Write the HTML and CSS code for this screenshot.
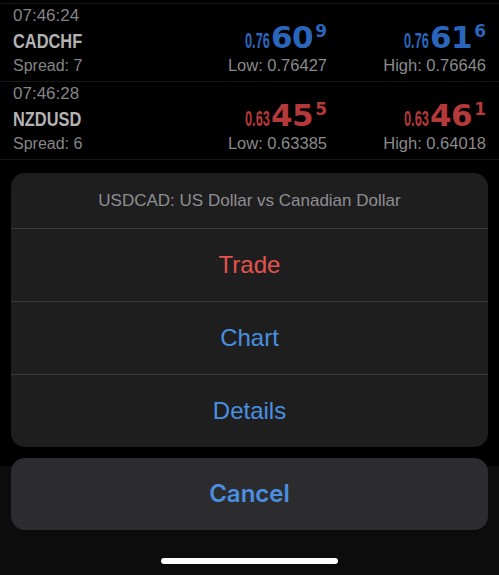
FILE: index.html
```html
<!DOCTYPE html>
<html lang="en">
<head>
    <meta charset="UTF-8">
    <meta name="viewport" content="width=device-width, initial-scale=1.0">
    <title>Quotes</title>
    <link rel="stylesheet" href="styles.css">
</head>
<body>

    <div class="screen">
        <!-- Quotes list (behind the action sheet) -->
        <div class="quotes">
            <div class="quote">
                <div class="symbol">
                    <div class="time">07:46:24</div>
                    <div class="name"><span>CADCHF</span></div>
                    <div class="spread">Spread: 7</div>
                </div>
                <div class="price up">
                    <div class="rate"><span class="head">0.76</span><span class="big">60</span><span class="pip">9</span></div>
                    <div class="range">Low: 0.76427</div>
                </div>
                <div class="price up">
                    <div class="rate"><span class="head">0.76</span><span class="big">61</span><span class="pip">6</span></div>
                    <div class="range">High: 0.76646</div>
                </div>
            </div>
            <div class="quote">
                <div class="symbol">
                    <div class="time">07:46:28</div>
                    <div class="name"><span>NZDUSD</span></div>
                    <div class="spread">Spread: 6</div>
                </div>
                <div class="price down">
                    <div class="rate"><span class="head">0.63</span><span class="big">45</span><span class="pip">5</span></div>
                    <div class="range">Low: 0.63385</div>
                </div>
                <div class="price down">
                    <div class="rate"><span class="head">0.63</span><span class="big">46</span><span class="pip">1</span></div>
                    <div class="range">High: 0.64018</div>
                </div>
            </div>
        </div>

        <div class="tabbar"></div>

        <!-- Action sheet -->
        <div class="overlay">
            <div class="sheet">
                <div class="sheet-title">USDCAD: US Dollar vs Canadian Dollar</div>
                <div class="sheet-action danger">Trade</div>
                <div class="sheet-action">Chart</div>
                <div class="sheet-action">Details</div>
            </div>
            <div class="cancel">Cancel</div>
            <div class="home-bar"></div>
        </div>
    </div>

</body>
</html>
```

FILE: styles.css
```css
body {
    margin: 0;
    background-color: #000;
    font-family: "Liberation Sans", Arial, sans-serif;
}

.screen {
    position: relative;
    display: flex;
    flex-direction: column;
    height: 575px;
    overflow: hidden;
    background-color: #000;
}

/* Quotes list */
.quotes {
    margin-top: 3px;
    border-top: 1px solid #161616;
}
.quote {
    display: grid;
    grid-template-columns: 1fr 160px 159px;
    height: 77px;
    padding: 0 13px;
    border-bottom: 1px solid #161616;
}
.symbol {
    padding-top: 3px;
}
.time {
    font-size: 17px;
    line-height: 18px;
    color: #858585;
}
/* condensed bold look, no narrow face installed */
.name {
    margin-top: 4px;
    font-weight: bold;
    font-size: 20px;
    line-height: 24px;
    color: #b3b3b3;
}
.name span {
    display: inline-block;
    transform: scaleX(0.82);
    transform-origin: left center;
}
.spread {
    margin-top: 2px;
    font-size: 16px;
    line-height: 22px;
    color: #858585;
}

.price {
    padding-top: 16px;
    text-align: right;
}
.price .rate {
    height: 34px;
    line-height: 34px;
    white-space: nowrap;
}
.price .head {
    display: inline-block;
    margin-left: -18px;
    margin-right: 1px;
    font-weight: bold;
    font-size: 22px;
    transform: scaleX(0.58);
    transform-origin: right center;
}
.price .big {
    font-family: "DejaVu Sans", sans-serif;
    font-weight: bold;
    font-size: 31px;
    letter-spacing: -0.5px;
}
.price .pip {
    margin-left: 2px;
    font-family: "DejaVu Sans", sans-serif;
    font-weight: bold;
    font-size: 17px;
    line-height: 0;
    vertical-align: 11px;
}
.price.up .rate {
    color: #2b66bd;
}
.price.down .rate {
    color: #b5383a;
}
.price .range {
    font-size: 16.5px;
    line-height: 22px;
    color: #8a8a8a;
}

.tabbar {
    margin-top: auto;
    height: 109px;
    background-color: #0c0c0c;
}

/* Action sheet */
.overlay {
    position: absolute;
    top: 0;
    left: 0;
    right: 0;
    bottom: 0;
    display: flex;
    flex-direction: column;
    justify-content: flex-end;
    padding: 0 11px 11px;
}
.sheet {
    background-color: #1e1e1f;
    border-radius: 14px;
    overflow: hidden;
}
.sheet-title {
    height: 55px;
    line-height: 55px;
    text-align: center;
    font-size: 17px;
    color: #8e8e93;
}
.sheet-action {
    height: 72px;
    line-height: 72px;
    border-top: 1px solid #3a3a3c;
    text-align: center;
    font-size: 24px;
    color: #4a8fe0;
}
.sheet-action.danger {
    color: #e5534b;
}
.cancel {
    margin-top: 11px;
    height: 72px;
    line-height: 72px;
    background-color: #2c2c2e;
    border-radius: 14px;
    text-align: center;
    font-family: Inter, "Liberation Sans", sans-serif;
    font-size: 24px;
    font-weight: 600;
    color: #4a8fe0;
}
.home-bar {
    width: 177px;
    height: 6px;
    margin: 28px auto 0;
    border-radius: 3px;
    background-color: #fff;
}
```
